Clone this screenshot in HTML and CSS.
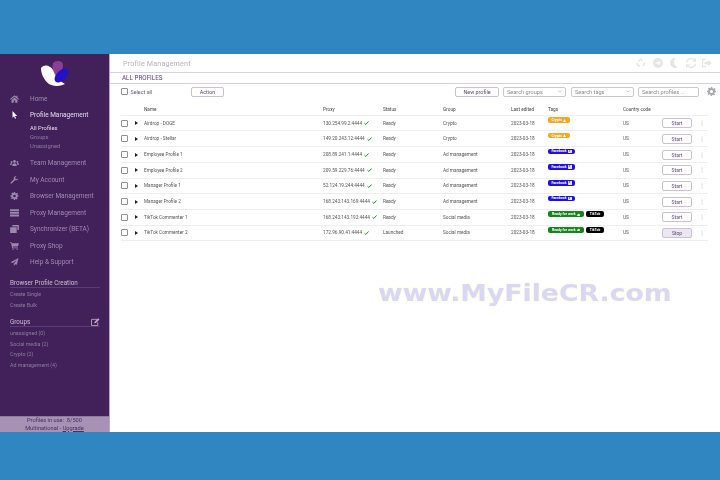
FILE: index.html
```html
<!DOCTYPE html>
<html lang="en">
<head>
<meta charset="utf-8">
<title>Profile Management</title>
<link rel="stylesheet" href="styles.css">
</head>
<body>
<svg class="defs" width="0" height="0" aria-hidden="true">
  <symbol id="dots" viewBox="0 0 4 12"><circle cx="2" cy="2" r="1"/><circle cx="2" cy="6" r="1"/><circle cx="2" cy="10" r="1"/></symbol>
  <symbol id="check" viewBox="0 0 10 8"><path d="M1 4.500 3.600 7 9 1" fill="none" stroke="#1f8f2a" stroke-width="2"/></symbol>
  <symbol id="thumb" viewBox="0 0 8 8"><path d="M0 4h2v4H0zM2.500 4 4 1c1 0 1 1 .8 2H8L7 8H2.500z" fill="#fff"/></symbol>
</svg>
<div class="app">
  <aside class="sidebar">
    <svg class="logo" viewBox="0 0 28 27" width="28" height="27">
      <path d="M12 3C15 0 22 0 22 5c0 5-2 9-5 13-3-3-7-9-5-15z" fill="#8d3f97"/>
      <path d="M0 8C3 4 9 5 12 10c2 5 5 10 12 14-6 3-13 2-16 0C3 20 0 14 0 8z" fill="#fff"/>
      <ellipse cx="20.500" cy="15.500" rx="8.500" ry="4.800" transform="rotate(-45 20.500 15.500)" fill="#2311c9"/>
    </svg>
    <nav class="nav">
      <a class="nav-item"><svg class="nav-icon" viewBox="0 0 12 10"><path d="M6 0 0 5l1 1 5-4 5 4 1-1-2-1.700V.700H8.500v1.400zM2 6.500V10h3V7h2v3h3V6.500L6 3z"/></svg>Home</a>
      <a class="nav-item nav-active"><svg class="nav-icon" viewBox="0 0 12 12"><path d="M3 0v10l2.300-2 1.500 3.500 1.500-.7L6.800 7.500H10z" fill="#fff"/></svg>Profile Management</a>
      <div class="subnav">
        <a class="sub-active">All Profiles</a>
        <a>Groups</a>
        <a>Unassigned</a>
      </div>
      <a class="nav-item"><svg class="nav-icon" viewBox="0 0 14 10"><circle cx="7" cy="2.500" r="2.200"/><circle cx="2.500" cy="3.500" r="1.500"/><circle cx="11.500" cy="3.500" r="1.500"/><path d="M3.500 9.500C3.500 7 5 5.500 7 5.500s3.500 1.500 3.500 4zM0 8c0-2 1-3 2.500-3l.8.400C2.700 6 2.400 7 2.400 8zM14 8c0-2-1-3-2.500-3l-.8.400c.6.600.9 1.600.9 2.600z"/></svg>Team Management</a>
      <a class="nav-item"><svg class="nav-icon" viewBox="0 0 12 12"><path d="M11.500 3 9.500 5 7.500 4.500 7 2.500 9 .500C7 0 5 1 4.800 3c0 .7.100 1.200.3 1.700L.500 9.300c-.7.700-.7 1.300-.2 1.800s1.200.5 1.800-.2l4.600-4.600c2.700.8 5.300-1 4.300-3.300z"/></svg>My Account</a>
      <a class="nav-item"><svg class="nav-icon" viewBox="0 0 12 12"><path fill-rule="evenodd" d="M5 0h2l.3 1.700 1.300.6L10 1.300l1.400 1.400-1 1.500.6 1.300L12 5v2l-1.700.3-.5 1.300 1 1.400-1.500 1.400-1.400-1-1.300.6L7 12H5l-.3-1.700-1.300-.5-1.400 1L.600 9.400l1-1.400L1.700 7 0 7V5l1.700-.3.500-1.300-1-1.400L2.700.600l1.400 1 1.300-.5zM6 4a2 2 0 1 0 0 4 2 2 0 0 0 0-4z"/></svg>Browser Management</a>
      <a class="nav-item"><svg class="nav-icon" viewBox="0 0 12 10"><path d="M0 0h12v2.500H0zM0 3.500h12V6H0zM0 7h12v2.800H0z"/></svg>Proxy Management</a>
      <a class="nav-item"><svg class="nav-icon" viewBox="0 0 12 11"><path d="M3 0h9v7H10V2H3zM0 3h9v8H0z"/></svg>Synchronizer (BETA)</a>
      <a class="nav-item"><svg class="nav-icon" viewBox="0 0 12 10"><path d="M0 0h2l.4 1.200H12l-1.500 4.500H3.600L4 7h6.500v1H3L1.300 1H0z"/><circle cx="4" cy="9.200" r=".9"/><circle cx="9.500" cy="9.200" r=".9"/></svg>Proxy Shop</a>
      <a class="nav-item"><svg class="nav-icon" viewBox="0 0 12 12"><path d="M12 0 0 6.500l3.500 1L9.500 3 5 8.500V12l2-2.700 2.500.9z"/></svg>Help &amp; Support</a>
    </nav>
    <section class="side-section section-create">
      <h2 class="side-title">Browser Profile Creation</h2>
      <a>Create Single</a>
      <a>Create Bulk</a>
    </section>
    <section class="side-section section-groups">
      <h2 class="side-title">Groups
        <svg class="edit" viewBox="0 0 10 9" width="9" height="8"><path d="M7 1.500H.500v7h7V5" fill="none" stroke="#b9a9c6"/><path d="M3.500 6 4 4.200 8 .300l1.500 1.400L5.500 5.600z" fill="#b9a9c6"/></svg>
      </h2>
      <a>unassigned (0)</a>
      <a>Social media (2)</a>
      <a>Crypto (2)</a>
      <a>Ad management (4)</a>
    </section>
    <div class="usage">
      <div>Profiles in use: &nbsp;8/500</div>
      <div>Multinational - <u>Upgrade</u></div>
    </div>
  </aside>
  <main class="main">
    <header class="topbar">
      <h1>Profile Management</h1>
      <div class="top-icons">
        <svg viewBox="0 0 12 12" width="10" height="10"><path d="M6 0 8 3 6.500 4 5 2.500 3.500 5 1.800 4zM11.500 6 10 9.500H7.500V8h2L8.500 6l1.700-1zM0 7l1.500-1.500L3.500 8.300H5v2H2z"/></svg>
        <svg viewBox="0 0 12 12" width="10" height="10"><path fill-rule="evenodd" d="M6 0a6 6 0 1 1 0 12A6 6 0 0 1 6 0zM9 3.500 2.500 6l2 .8L8 4.500 5.300 7.300l2.300 1.500z"/></svg>
        <svg viewBox="0 0 12 12" width="10" height="10"><path d="M8 0a6 6 0 1 0 3 10.500A6 6 0 0 1 8 0z"/></svg>
        <svg viewBox="0 0 12 12" width="10" height="10"><path d="M10.500 2V0l1.500.500V4.500H8L8.500 3l1 0A4.500 4.500 0 0 0 1.500 5H0a6 6 0 0 1 10.500-3zM1.500 10v2L0 11.500V7.500h4L3.500 9l-1 0a4.500 4.500 0 0 0 8-2H12a6 6 0 0 1-10.500 3z"/></svg>
        <svg viewBox="0 0 12 12" width="10" height="10"><path d="M0 1h5v1.500H1.500v7H5V11H0zM7 2.500 12 6 7 9.500V7.500H3v-3h4z"/></svg>
      </div>
    </header>
    <div class="section-head">ALL PROFILES</div>
    <div class="toolbar">
      <label class="select-all"><span class="box"></span>Select all</label>
      <button class="btn btn-action">Action</button>
      <button class="btn btn-new">New profile</button>
      <div class="select select-groups">Search groups<svg viewBox="0 0 6 4" width="4" height="3"><path d="M.500.500 3 3 5.500.500" fill="none" stroke="#aaa"/></svg></div>
      <div class="select select-tags">Search tags<svg viewBox="0 0 6 4" width="4" height="3"><path d="M.500.500 3 3 5.500.500" fill="none" stroke="#aaa"/></svg></div>
      <div class="select select-search">Search profiles ...</div>
      <svg class="cog" viewBox="0 0 12 12" width="9" height="9"><path fill-rule="evenodd" d="M5 0h2l.3 1.700 1.300.6L10 1.300l1.400 1.400-1 1.500.6 1.300L12 5v2l-1.700.3-.5 1.300 1 1.400-1.500 1.400-1.400-1-1.300.6L7 12H5l-.3-1.700-1.300-.5-1.400 1L.600 9.400l1-1.400L1.700 7 0 7V5l1.700-.3.500-1.300-1-1.400L2.700.600l1.400 1 1.300-.5zM6 4a2 2 0 1 0 0 4 2 2 0 0 0 0-4z"/></svg>
    </div>
    <div class="table">
      <div class="row head"><span></span><span>Name</span><span>Proxy</span><span>Status</span><span>Group</span><span>Last edited</span><span>Tags</span><span>Country code</span><span></span><span></span></div>

      <div class="row"><span class="sel"><i class="box"></i><b class="caret"></b></span><span>Airdrop - DOGE</span><span class="proxy">130.254.99.2:4444<svg width="5" height="4"><use href="#check"/></svg></span><span>Ready</span><span>Crypto</span><span>2023-03-18</span><span class="tags"><em class="tag crypto">Crypto <svg viewBox="0 0 8 8" width="3" height="3"><path d="M4 0 8 8H0z" fill="#fff"/></svg></em></span><span>US</span><span><button class="btn row-btn">Start</button></span><svg class="dots" width="2" height="6"><use href="#dots"/></svg></div>

      <div class="row"><span class="sel"><i class="box"></i><b class="caret"></b></span><span>Airdrop - Stellar</span><span class="proxy">149.20.243.12:4444<svg width="5" height="4"><use href="#check"/></svg></span><span>Ready</span><span>Crypto</span><span>2023-03-18</span><span class="tags"><em class="tag crypto">Crypto <svg viewBox="0 0 8 8" width="3" height="3"><path d="M4 0 8 8H0z" fill="#fff"/></svg></em></span><span>US</span><span><button class="btn row-btn">Start</button></span><svg class="dots" width="2" height="6"><use href="#dots"/></svg></div>

      <div class="row"><span class="sel"><i class="box"></i><b class="caret"></b></span><span>Employee Profile 1</span><span class="proxy">208.89.241.1:4444<svg width="5" height="4"><use href="#check"/></svg></span><span>Ready</span><span>Ad management</span><span>2023-03-18</span><span class="tags"><em class="tag facebook">Facebook <i class="fb">f</i></em></span><span>US</span><span><button class="btn row-btn">Start</button></span><svg class="dots" width="2" height="6"><use href="#dots"/></svg></div>

      <div class="row"><span class="sel"><i class="box"></i><b class="caret"></b></span><span>Employee Profile 2</span><span class="proxy">209.59.229.76:4444<svg width="5" height="4"><use href="#check"/></svg></span><span>Ready</span><span>Ad management</span><span>2023-03-18</span><span class="tags"><em class="tag facebook">Facebook <i class="fb">f</i></em></span><span>US</span><span><button class="btn row-btn">Start</button></span><svg class="dots" width="2" height="6"><use href="#dots"/></svg></div>

      <div class="row"><span class="sel"><i class="box"></i><b class="caret"></b></span><span>Manager Profile 1</span><span class="proxy">52.124.19.244:4444<svg width="5" height="4"><use href="#check"/></svg></span><span>Ready</span><span>Ad management</span><span>2023-03-18</span><span class="tags"><em class="tag facebook">Facebook <i class="fb">f</i></em></span><span>US</span><span><button class="btn row-btn">Start</button></span><svg class="dots" width="2" height="6"><use href="#dots"/></svg></div>

      <div class="row"><span class="sel"><i class="box"></i><b class="caret"></b></span><span>Manager Profile 2</span><span class="proxy">168.243.143.169:4444<svg width="5" height="4"><use href="#check"/></svg></span><span>Ready</span><span>Ad management</span><span>2023-03-18</span><span class="tags"><em class="tag facebook">Facebook <i class="fb">f</i></em></span><span>US</span><span><button class="btn row-btn">Start</button></span><svg class="dots" width="2" height="6"><use href="#dots"/></svg></div>

      <div class="row"><span class="sel"><i class="box"></i><b class="caret"></b></span><span>TikTok Commenter 1</span><span class="proxy">168.243.143.192:4444<svg width="5" height="4"><use href="#check"/></svg></span><span>Ready</span><span>Social media</span><span>2023-03-18</span><span class="tags"><em class="tag work">Ready for work <svg width="3" height="3" viewBox="0 0 8 8"><use href="#thumb"/></svg></em><em class="tag tiktok">TikTok</em></span><span>US</span><span><button class="btn row-btn">Start</button></span><svg class="dots" width="2" height="6"><use href="#dots"/></svg></div>

      <div class="row"><span class="sel"><i class="box"></i><b class="caret"></b></span><span>TikTok Commenter 2</span><span class="proxy">172.96.90.41:4444<svg width="5" height="4"><use href="#check"/></svg></span><span>Launched</span><span>Social media</span><span>2023-03-18</span><span class="tags"><em class="tag work">Ready for work <svg width="3" height="3" viewBox="0 0 8 8"><use href="#thumb"/></svg></em><em class="tag tiktok">TikTok</em></span><span>US</span><span><button class="btn row-btn btn-stop">Stop</button></span><svg class="dots" width="2" height="6"><use href="#dots"/></svg></div>
    </div>
  </main>
</div>
<div class="watermark">www.MyFileCR.com</div>
</body>
</html>
```

FILE: styles.css
```css
* { box-sizing: border-box; }
html, body { margin: 0; height: 100%; }
body {
  position: relative;
  width: 720px;
  height: 480px;
  overflow: hidden;
  padding-top: 54px;
  background: #2f86c1;
  font-family: Roboto, "Liberation Sans", sans-serif;
}
.defs { position: absolute; }
.app {
  display: flex;
  height: 378px;
  background: #fff;
  filter: blur(0.4px);
}
.sidebar {
  position: relative;
  flex: 0 0 110px;
  display: flex;
  flex-direction: column;
  background: #42215a;
  border-right: 1px solid #b9a9c6;
  color: #a590b5;
}
.logo { display: block; margin: 6px 0 0 41px; flex: none; }
.nav { display: flex; flex-direction: column; margin-top: 3.300px; }
.nav-item {
  display: flex;
  align-items: center;
  height: 16.500px;
  font-size: 6.500px;
  padding-left: 10px;
  color: #a08bb0;
}
.nav-icon { width: 9px; height: 8px; margin-right: 11px; fill: #9c88ac; flex: none; }
.nav-active { color: #e4dcea; }
.subnav {
  display: flex;
  flex-direction: column;
  padding: 0 0 0 30px;
  margin-top: .5px;
  margin-bottom: 4px;
  font-size: 5.800px;
  line-height: 9px;
  color: #8f7aa1;
}
.sub-active { color: #e4dcea; }
.side-section {
  display: flex;
  flex-direction: column;
  padding: 0 9px 0 10px;
  font-size: 5.300px;
  color: #8f7aa1;
}
.side-section a { line-height: 10.500px; }
.section-create { margin-top: 8px; }
.section-groups { margin-top: 7px; }
.side-title {
  display: flex;
  justify-content: space-between;
  align-items: center;
  margin: 0 0 1px;
  height: 10px;
  font-size: 6.300px;
  font-weight: 400;
  color: #c9bcd4;
  border-bottom: 1px solid #5d3a7a;
}
.usage {
  position: absolute;
  left: 0;
  right: 0;
  bottom: 0;
  height: 16px;
  background: #a792b5;
  border-top: 1px solid #8d79a0;
  text-align: center;
  font-size: 5.700px;
  line-height: 7.500px;
  color: #4a2f63;
}
.main { flex: 1; min-width: 0; color: #333; display: flex; flex-direction: column; }
.topbar {
  height: 19px;
  flex: none;
  display: flex;
  align-items: center;
  justify-content: space-between;
  padding: 0 8px 0 13px;
  border-bottom: 1px solid #d6d3dc;
}
.topbar h1 { margin: 0; font-size: 7.200px; font-weight: 400; color: #b3b3bb; letter-spacing: .15px; }
.top-icons { display: flex; gap: 6.500px; fill: #e6e6e9; }
.section-head {
  height: 11px;
  flex: none;
  padding-left: 12px;
  font-size: 6.300px;
  line-height: 10px;
  color: #5c3d78;
  border-bottom: 1px solid #d6d3dc;
}
.toolbar {
  display: flex;
  align-items: center;
  height: 15px;
  flex: none;
  padding-left: 11px;
}
.box {
  display: inline-block;
  width: 7px;
  height: 7px;
  border: 1px solid #8f8f8f;
  border-radius: 1px;
  background: #fff;
}
.select-all { display: flex; align-items: center; gap: 2.500px; font-size: 5.400px; color: #6b5a7c; width: 70px; }
.btn {
  padding: 0;
  font: inherit;
  background: #fff;
  border: 1px solid #c8c2d2;
  border-radius: 2px;
  color: #5c4a70;
  text-align: center;
}
.btn-action { width: 33px; height: 10px; font-size: 5.400px; line-height: 8px; }
.btn-new { width: 44px; height: 10px; font-size: 5.400px; line-height: 8px; margin-left: 231px; }
.select {
  display: flex;
  align-items: center;
  justify-content: space-between;
  height: 10px;
  margin-left: 4px;
  padding: 0 3px;
  border: 1px solid #c8c8cf;
  border-radius: 2px;
  font-size: 5.600px;
  color: #8c8c94;
}
.select-groups { width: 63px; }
.select-tags { width: 63px; margin-left: 5px; }
.select-search { width: 61px; margin-left: 4px; }
.cog { margin-left: 8px; fill: #a8a8ad; }
.table { margin: 4.800px 12px 0 11px; display: flex; flex-direction: column; }
.row {
  display: grid;
  grid-template-columns: 23px 179px 60px 60px 68px 37px 75px 39px 39px 2px;
  align-items: center;
  height: 15.700px;
  font-size: 4.700px;
  color: #555;
  border-bottom: 1px solid #eeeeef;
}
.row.head { height: 12px; color: #444; }
.sel { display: flex; align-items: center; gap: 6.500px; }
.caret {
  display: block;
  width: 0;
  height: 0;
  border-left: 3px solid #222;
  border-top: 2px solid transparent;
  border-bottom: 2px solid transparent;
}
.proxy { display: flex; align-items: center; gap: 2px; }
.tags { display: flex; gap: 2px; align-self: start; padding-top: 1.500px; }
.tag {
  display: flex;
  align-items: center;
  justify-content: center;
  gap: 1.500px;
  height: 5.500px;
  padding: 0 2px;
  border-radius: 2px;
  font-size: 3.500px;
  font-style: normal;
  font-weight: 700;
  color: #fff;
  white-space: nowrap;
}
.crypto { background: #f5a623; width: 22px; }
.facebook { background: #1f10dd; width: 27px; }
.work { background: #15861c; width: 36px; }
.tiktok { background: #000; width: 18px; }
.fb {
  width: 3.500px;
  height: 3.500px;
  background: #dfe0fa;
  color: #1f10dd;
  font-size: 3px;
  font-style: normal;
  line-height: 3.500px;
  text-align: center;
}
.row-btn { display: block; width: 30px; height: 10px; font-size: 5px; line-height: 8px; }
.btn-stop { background: #ece7f3; }
.dots { fill: #b5b5b5; }
.watermark {
  position: absolute;
  left: 378px;
  top: 280px;
  font-family: "DejaVu Sans", sans-serif;
  font-size: 23px;
  font-weight: 700;
  line-height: 27px;
  color: #d9d8f3;
  text-shadow: 0 0 2px #fdf8df, 0 0 3px #fdf8df;
  white-space: nowrap;
  transform: scaleX(1.16);
  transform-origin: left center;
}
```
